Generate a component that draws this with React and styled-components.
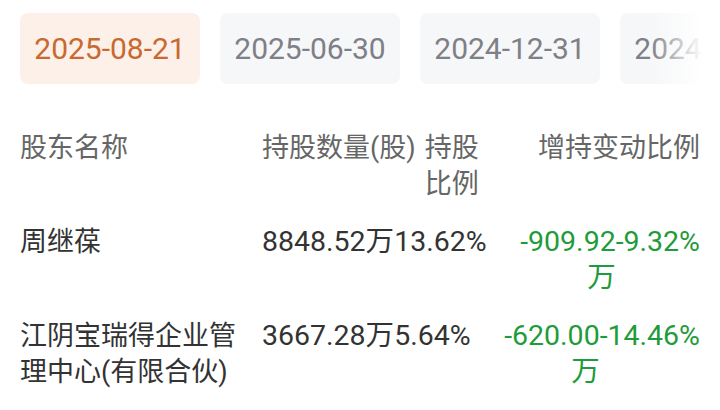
import React from "react";
import styled, { createGlobalStyle } from "styled-components";

const GlobalStyle = createGlobalStyle`
  html, body {
    margin: 0;
    padding: 0;
    background: #fff;
  }
  body {
    font-family: Roboto, "Noto Sans CJK SC", sans-serif;
    -webkit-font-smoothing: antialiased;
  }
`;

const Page = styled.div`
  width: 720px;
  height: 410px;
  overflow: hidden;
  background: #fff;
`;

const TabsWrap = styled.div`
  position: relative;
  padding-top: 13px;
  overflow: hidden;
`;

const Tabs = styled.div`
  display: flex;
  gap: 20px;
  padding-left: 20px;
  width: max-content;
`;

const Tab = styled.div`
  flex: 0 0 180px;
  height: 71px;
  border-radius: 8px;
  display: flex;
  align-items: center;
  justify-content: center;
  font-family: Roboto, sans-serif;
  font-size: 30px;
  color: ${(p) => (p.$active ? "#c8692f" : "#7e8086")};
  background: ${(p) => (p.$active ? "#fcf0e9" : "#f6f7f9")};
`;

const Fade = styled.div`
  position: absolute;
  right: 0;
  top: 0;
  bottom: 0;
  width: 70px;
  background: linear-gradient(to right, rgba(255, 255, 255, 0), #fff 75%);
`;

const Table = styled.div`
  margin-top: 35px;
`;

const Row = styled.div`
  display: flex;
  align-items: flex-start;
  padding: 11px 20px;
  font-size: 27px;
  line-height: 36px;
  color: ${(p) => (p.$head ? "#666" : "#333")};
`;

const Name = styled.div`
  flex: 0 0 242px;
`;

const Qty = styled.div`
  flex: none;
`;

const Ratio = styled.div`
  flex: none;
  margin-left: ${(p) => p.$gap || 0}px;
  width: ${(p) => (p.$w ? `${p.$w}px` : "auto")};
`;

const Change = styled.div`
  flex: 1;
  min-width: 0;
  display: flex;
  justify-content: flex-end;
  color: ${(p) => (p.$head ? "#666" : "#1e9c3a")};
`;

const Amount = styled.div`
  max-width: 118px;
  text-align: right;
`;

const Num = styled.span`
  font-family: Roboto, "Noto Sans CJK SC", sans-serif;
  font-size: 28.5px;
`;

const dates = ["2025-08-21", "2025-06-30", "2024-12-31", "2024-09-30"];

const rows = [
  { name: "周继葆", qty: "8848.52万", ratio: "13.62%", amount: "-909.92万", change: "-9.32%" },
  { name: "江阴宝瑞得企业管理中心(有限合伙)", qty: "3667.28万", ratio: "5.64%", amount: "-620.00万", change: "-14.46%" },
];

export default function App() {
  return (
    <Page>
      <GlobalStyle />
      <TabsWrap>
        <Tabs>
          {dates.map((d, i) => (
            <Tab key={d} $active={i === 0}>
              {d}
            </Tab>
          ))}
        </Tabs>
        <Fade />
      </TabsWrap>
      <Table>
        <Row $head>
          <Name>股东名称</Name>
          <Qty>持股数量(股)</Qty>
          <Ratio $gap={9} $w={54}>
            持股比例
          </Ratio>
          <Change $head>增持变动比例</Change>
        </Row>
        {rows.map((r) => (
          <Row key={r.name}>
            <Name>{r.name}</Name>
            <Qty>
              <Num>{r.qty}</Num>
            </Qty>
            <Ratio>
              <Num>{r.ratio}</Num>
            </Ratio>
            <Change>
              <Amount>
                <Num>{r.amount}</Num>
              </Amount>
              <Num>{r.change}</Num>
            </Change>
          </Row>
        ))}
      </Table>
    </Page>
  );
}
